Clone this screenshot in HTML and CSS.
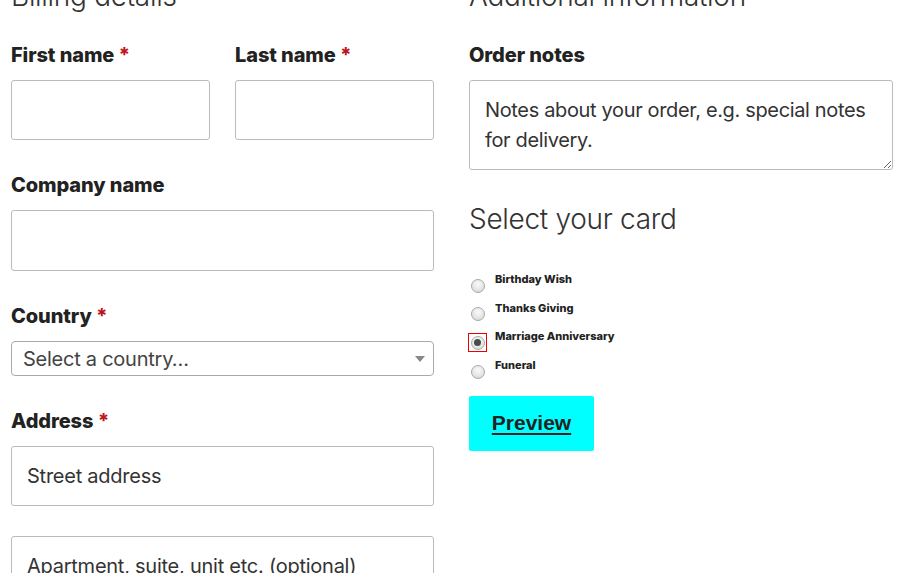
FILE: index.html
```html
<!DOCTYPE html>
<html lang="en">
<head>
<meta charset="utf-8">
<title>Checkout</title>
<link rel="stylesheet" href="styles.css">
</head>
<body>
<div class="page">
  <section class="col">
    <h3 class="section-title">Billing details</h3>
    <div class="row-split">
      <div class="field">
        <label class="label">First name <abbr class="req">*</abbr></label>
        <input class="input" type="text">
      </div>
      <div class="field">
        <label class="label">Last name <abbr class="req">*</abbr></label>
        <input class="input" type="text">
      </div>
    </div>
    <div class="field field-company">
      <label class="label">Company name</label>
      <input class="input" type="text">
    </div>
    <div class="field">
      <label class="label">Country <abbr class="req">*</abbr></label>
      <div class="select">
        <span>Select a country…</span>
        <svg class="caret" width="10" height="6" viewBox="0 0 10 6"><path d="M0 0h10L5 6z" fill="#888"/></svg>
      </div>
    </div>
    <div class="field">
      <label class="label">Address <abbr class="req">*</abbr></label>
      <input class="input" type="text" placeholder="Street address">
    </div>
    <div class="field">
      <input class="input" type="text" placeholder="Apartment, suite, unit etc. (optional)">
    </div>
  </section>
  <section class="col">
    <h3 class="section-title">Additional information</h3>
    <div class="field field-notes">
      <label class="label">Order notes</label>
      <textarea class="textarea" placeholder="Notes about your order, e.g. special notes for delivery."></textarea>
    </div>
    <h3 class="card-title">Select your card</h3>
    <ul class="cards">
      <li class="card"><span class="radio-box"><span class="radio"></span></span><span class="card-label">Birthday Wish</span></li>
      <li class="card"><span class="radio-box"><span class="radio"></span></span><span class="card-label">Thanks Giving</span></li>
      <li class="card"><span class="radio-box focused"><span class="radio checked"></span></span><span class="card-label">Marriage Anniversary</span></li>
      <li class="card"><span class="radio-box"><span class="radio"></span></span><span class="card-label">Funeral</span></li>
    </ul>
    <button class="preview" type="button">Preview</button>
  </section>
</div>
</body>
</html>
```
FILE: styles.css
```css
* { box-sizing: border-box; }
html, body { margin: 0; padding: 0; background: #fff; }
body {
  font-family: Inter, "Open Sans", "Liberation Sans", sans-serif;
  color: #333;
  overflow: hidden;
}
.page {
  display: grid;
  grid-template-columns: 423px 424px;
  column-gap: 35px;
  padding-left: 11px;
}
.col { display: flex; flex-direction: column; }
.section-title {
  margin: -24px 0 0 0;
  height: 64px;
  font-size: 28px;
  line-height: 40px;
  font-weight: 300;
  color: #333;
  letter-spacing: -0.3px;
}
.row-split {
  display: grid;
  grid-template-columns: 199px 199px;
  column-gap: 25px;
}
.field { display: flex; flex-direction: column; margin-bottom: 30px; }
.field-company .input { height: 61px; }
.label {
  font-size: 20px;
  line-height: 30px;
  height: 30px;
  font-weight: 800;
  color: #222;
  margin-bottom: 10px;
  letter-spacing: -0.1px;
}
.req { color: #c0151d; text-decoration: none; border: 0; font-weight: 800; }
.input {
  height: 60px;
  width: 100%;
  border: 1px solid #bbb;
  border-radius: 3px;
  padding: 0 15px;
  font-family: inherit;
  font-size: 20px;
  letter-spacing: -0.25px;
  color: #333;
  background: #fff;
}
.input::placeholder { color: #333; opacity: 1; }
.select {
  height: 35px;
  border: 1px solid #aaa;
  border-radius: 4px;
  display: flex;
  align-items: center;
  justify-content: space-between;
  padding: 0 8px 0 11px;
  font-size: 20px;
  letter-spacing: -0.25px;
  color: #444;
}
.textarea {
  height: 90px;
  width: 100%;
  border: 1px solid #bbb;
  border-radius: 3px;
  padding: 14px 15px;
  font-family: inherit;
  font-size: 20px;
  letter-spacing: -0.35px;
  line-height: 30px;
  color: #333;
  resize: vertical;
}
.textarea::placeholder { color: #333; opacity: 1; }
.field-notes { margin-bottom: 31px; }
.card-title {
  margin: 0 0 34px 0;
  font-size: 28px;
  line-height: 36px;
  font-weight: 300;
  letter-spacing: -0.3px;
  color: #333;
}
.cards { list-style: none; margin: 0 0 10px 0; padding: 0; }
.card {
  display: flex;
  align-items: flex-start;
  height: 28.7px;
}
.radio-box {
  width: 19px;
  height: 19px;
  margin: 5px 8px 0 -1px;
  border: 1px solid transparent;
  display: flex;
  align-items: center;
  justify-content: center;
  flex: none;
}
.radio-box.focused { border-color: #e00; }
.radio {
  width: 14px;
  height: 14px;
  border-radius: 50%;
  border: 1px solid #a9a9a9;
  background: radial-gradient(circle at 50% 35%, #fafafa 0%, #e6e6e6 55%, #cfcfcf 100%);
  display: flex;
  align-items: center;
  justify-content: center;
}
.radio.checked::after {
  content: "";
  width: 7px;
  height: 7px;
  border-radius: 50%;
  background: #4a4a4a;
}
.card-label {
  font-size: 11px;
  line-height: 16px;
  font-weight: 800;
  color: #222;
}
.preview {
  align-self: flex-start;
  width: 125px;
  height: 55px;
  background: #00ffff;
  border: 0;
  border-radius: 2px;
  font-family: "Liberation Sans", Arial, sans-serif;
  font-weight: 700;
  font-size: 21px;
  color: #222;
  text-decoration: underline;
  text-underline-offset: 3px;
  padding: 0;
}
```
